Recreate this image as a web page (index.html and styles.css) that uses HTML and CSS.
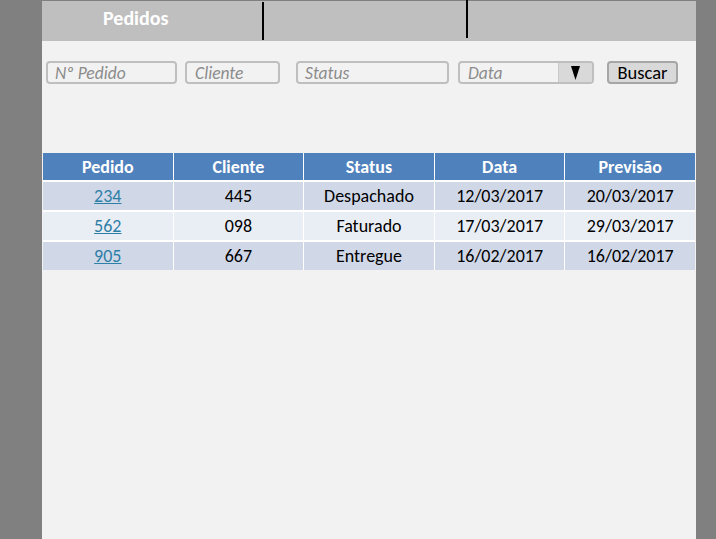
FILE: index.html
```html
<!DOCTYPE html>
<html lang="pt">
<head>
<meta charset="utf-8">
<link rel="stylesheet" href="styles.css">
</head>
<body>
<div class="panel">
  <div class="tabs">
    <div class="tab tab-first"><span>Pedidos</span></div>
    <div class="tab tab-mid"></div>
    <div class="tab tab-last"></div>
  </div>
  <div class="filters">
    <div class="field f-pedido">Nº Pedido</div>
    <div class="field f-cliente">Cliente</div>
    <div class="field f-status">Status</div>
    <div class="field f-data"><span class="data-label">Data</span><span class="drop"><svg width="9" height="14" viewBox="0 0 9 14"><polygon points="0,0 9,0 4.5,14" fill="#000"/></svg></span></div>
    <div class="btn">Buscar</div>
  </div>
  <div class="grid">
    <div class="th">Pedido</div><div class="th">Cliente</div><div class="th">Status</div><div class="th">Data</div><div class="th">Previsão</div>
    <div class="td odd"><a href="#">234</a></div><div class="td odd">445</div><div class="td odd">Despachado</div><div class="td odd">12/03/2017</div><div class="td odd">20/03/2017</div>
    <div class="td even"><a href="#">562</a></div><div class="td even">098</div><div class="td even">Faturado</div><div class="td even">17/03/2017</div><div class="td even">29/03/2017</div>
    <div class="td odd"><a href="#">905</a></div><div class="td odd">667</div><div class="td odd">Entregue</div><div class="td odd">16/02/2017</div><div class="td odd">16/02/2017</div>
  </div>
</div>
</body>
</html>
```
FILE: styles.css
```css
html, body {
  margin: 0;
  padding: 0;
}
body {
  background: #808080;
  font-family: Carlito, Lato, "Open Sans", sans-serif;
  height: 539px;
  overflow: hidden;
}
.panel {
  margin: 1px 0 0 42px;
  width: 654px;
  height: 538px;
  background: #f2f2f2;
}
.tabs {
  height: 40px;
  background: #bfbfbf;
  display: flex;
}
.tab {
  height: 38px;
  box-sizing: border-box;
}
.tab-first {
  width: 222px;
  border-right: 2px solid #000;
  margin-top: 1px;
  color: #fff;
  font-weight: bold;
  font-size: 20px;
  padding-left: 61px;
  line-height: 32px;
}
.tab-mid {
  width: 204px;
  border-right: 2px solid #000;
  margin-top: -1px;
}
.filters {
  display: flex;
  margin-top: 20px;
  padding-left: 4px;
  height: 23px;
}
.field {
  box-sizing: border-box;
  height: 23px;
  border: 2px solid #bfbfbf;
  border-radius: 4px;
  background: #f2f2f2;
  color: #8c8c8c;
  font-style: italic;
  font-size: 17.5px;
  line-height: 20px;
  padding-left: 7px;
}
.f-pedido { width: 131px; padding-left: 7px; }
.f-cliente { width: 95px; margin-left: 8px; padding-left: 8px; }
.f-status { width: 153px; margin-left: 16px; padding-left: 7px; }
.f-data {
  width: 136px;
  margin-left: 9px;
  display: flex;
  padding-left: 0;
}
.data-label {
  flex: 1;
  padding-left: 8px;
}
.drop {
  width: 33px;
  background: #d9d9d9;
  border-left: 1px solid #c8c8c8;
  display: flex;
  align-items: center;
  justify-content: center;
  border-radius: 0 2px 2px 0;
}
.btn {
  box-sizing: border-box;
  width: 71px;
  height: 23px;
  margin-left: 13px;
  background: #d9d9d9;
  border: 2px solid #a6a6a6;
  border-radius: 4px;
  color: #000;
  font-size: 18.5px;
  line-height: 20px;
  text-align: center;
}
.grid {
  margin: 69px 0 0 1px;
  width: 652px;
  display: grid;
  grid-template-columns: repeat(5, 1fr);
  column-gap: 1px;
  row-gap: 2px;
  background: #fff;
}
.th {
  height: 27px;
  background: #4f81bd;
  color: #fff;
  font-weight: bold;
  font-size: 18px;
  line-height: 29px;
  text-align: center;
}
.td {
  height: 28px;
  font-size: 18px;
  line-height: 28px;
  text-align: center;
  color: #000;
}
.odd { background: #d0d8e8; }
.even { background: #e9edf4; }
.td a {
  color: #2e7fa6;
  text-decoration: underline;
}
```
